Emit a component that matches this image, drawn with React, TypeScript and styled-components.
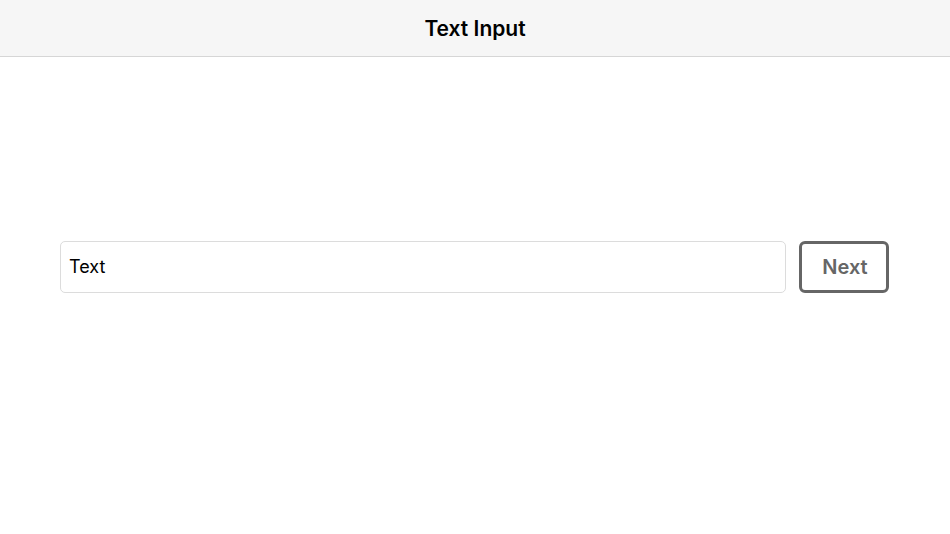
import { createGlobalStyle, styled } from "styled-components";

const GlobalStyle = createGlobalStyle`
  html, body {
    margin: 0;
    padding: 0;
    background: #ffffff;
    font-family: Inter, "Liberation Sans", Arial, sans-serif;
  }
`;

const Page = styled.div`
  width: 100%;
  min-height: 534px;
  display: flex;
  flex-direction: column;
`;

const Header = styled.header`
  height: 56px;
  background: #f6f6f6;
  border-bottom: 1px solid #d6d6d6;
  display: flex;
  align-items: center;
  justify-content: center;
`;

const Title = styled.h1`
  margin: 0;
  font-size: 21px;
  font-weight: 600;
  color: #000;
`;

const Body = styled.main`
  padding: 184px 61px 0 60px;
  display: flex;
  gap: 13px;
  align-items: stretch;
`;

const TextField = styled.input`
  flex: 1;
  height: 52px;
  box-sizing: border-box;
  border: 1px solid #dcdcdc;
  border-radius: 5px;
  padding: 0 8px 2px;
  font-family: inherit;
  font-size: 18px;
  color: #000;
  outline: none;
  background: #fff;
`;

const NextButton = styled.button`
  width: 90px;
  height: 52px;
  box-sizing: border-box;
  border: 3px solid #666666;
  border-radius: 6px;
  background: #fff;
  color: #666666;
  font-family: inherit;
  font-size: 20px;
  font-weight: 600;
  padding: 0 0 0 2px;
  cursor: pointer;
`;

export default function App() {
  return (
    <Page>
      <GlobalStyle />
      <Header>
        <Title>Text Input</Title>
      </Header>
      <Body>
        <TextField defaultValue="Text" />
        <NextButton>Next</NextButton>
      </Body>
    </Page>
  );
}
